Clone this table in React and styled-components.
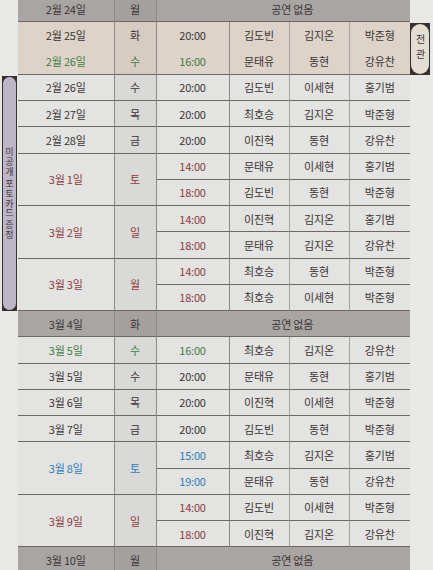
import React from "react";
import styled, { createGlobalStyle } from "styled-components";

const GlobalStyle = createGlobalStyle`
  html, body {
    margin: 0;
    padding: 0;
    background: #e8e8e7;
    overflow: hidden;
  }
  body {
    font-family: "Noto Sans CJK KR", "Noto Sans", sans-serif;
  }
`;

const tones = { plain: "#e3e3e2", tan: "#ddd3c8", off: "#a9a5a3" };
const dayTones = { plain: "#d9d9d8", tan: "#d6ccc1", off: "#a4a09e" };
const inks = { dark: "#3a3434", green: "#3f7b47", red: "#8c3b3d", blue: "#2c7cbf" };

const schedule = [
  { date: "2월 24일", day: "월", off: true },
  { date: "2월 25일", day: "화", tone: "tan", open: true, shows: [["20:00", "김도빈", "김지온", "박준형"]] },
  { date: "2월 26일", day: "수", tone: "tan", ink: "green", shows: [["16:00", "문태유", "동현", "강유찬"]] },
  { date: "2월 26일", day: "수", shows: [["20:00", "김도빈", "이세현", "홍기범"]] },
  { date: "2월 27일", day: "목", shows: [["20:00", "최호승", "김지온", "박준형"]] },
  { date: "2월 28일", day: "금", shows: [["20:00", "이진혁", "동현", "강유찬"]] },
  { date: "3월 1일", day: "토", ink: "red", shows: [["14:00", "문태유", "이세현", "홍기범"], ["18:00", "김도빈", "동현", "박준형"]] },
  { date: "3월 2일", day: "일", ink: "red", shows: [["14:00", "이진혁", "김지온", "홍기범"], ["18:00", "문태유", "김지온", "강유찬"]] },
  { date: "3월 3일", day: "월", ink: "red", shows: [["14:00", "최호승", "동현", "박준형"], ["18:00", "최호승", "이세현", "박준형"]] },
  { date: "3월 4일", day: "화", off: true },
  { date: "3월 5일", day: "수", ink: "green", shows: [["16:00", "최호승", "김지온", "강유찬"]] },
  { date: "3월 5일", day: "수", shows: [["20:00", "문태유", "동현", "홍기범"]] },
  { date: "3월 6일", day: "목", shows: [["20:00", "이진혁", "이세현", "박준형"]] },
  { date: "3월 7일", day: "금", shows: [["20:00", "김도빈", "동현", "박준형"]] },
  { date: "3월 8일", day: "토", ink: "blue", shows: [["15:00", "최호승", "김지온", "홍기범"], ["19:00", "문태유", "동현", "강유찬"]] },
  { date: "3월 9일", day: "일", ink: "red", shows: [["14:00", "김도빈", "이세현", "박준형"], ["18:00", "이진혁", "김지온", "강유찬"]] },
  { date: "3월 10일", day: "월", off: true },
];

const Sheet = styled.div`
  display: grid;
  grid-template-columns: 18px 96.5px 42px 73px 60px 60px 60.5px 23px;
  grid-auto-rows: 26.25px;
  margin-top: -4px;
  width: 433px;
  font-size: 11px;
  letter-spacing: -0.2px;
  color: #3a3434;
`;

const Cell = styled.div`
  grid-row: ${(p) => p.$row} / span ${(p) => p.$span || 1};
  display: flex;
  align-items: center;
  justify-content: center;
  box-sizing: border-box;
  background: ${(p) => tones[p.$tone || "plain"]};
  color: ${(p) => inks[p.$ink || "dark"]};
  border-bottom: ${(p) => (p.$open ? "none" : "1px solid #6f6767")};
  white-space: nowrap;
`;

const DateCell = styled(Cell)`
  grid-column: 2;
  border-right: 1px solid #8d8989;
`;

const DayCell = styled(Cell)`
  grid-column: 3;
  background: ${(p) => dayTones[p.$tone || "plain"]};
  border-right: 1px solid #8d8989;
`;

const TimeCell = styled(Cell)`
  grid-column: 4;
  border-right: 1px solid #8d8989;
`;

const NameCell = styled(Cell)`
  grid-column: ${(p) => p.$col};
  border-right: ${(p) => (p.$last ? "none" : "1px solid #a3a09f")};
`;

const OffCell = styled(Cell)`
  grid-column: 4 / span 4;
  padding-left: 18px;
`;

const BadgeFrame = styled.div`
  grid-column: ${(p) => p.$col};
  grid-row: ${(p) => p.$row} / span ${(p) => p.$span};
  justify-self: start;
  width: ${(p) => p.$width}px;
  margin-left: ${(p) => p.$inset}px;
  margin-top: 1px;
  box-sizing: border-box;
  padding: 1px;
  background: #372f30;
  display: flex;
`;

const Pill = styled.div`
  flex: 1;
  border-radius: ${(p) => p.$radius}px;
  background: ${(p) => p.$fill};
  display: flex;
  flex-direction: column;
  align-items: center;
  justify-content: center;
  gap: 2px;
`;

const VerticalText = styled.span`
  writing-mode: vertical-rl;
  text-orientation: upright;
  font-size: ${(p) => p.$size}px;
  line-height: 1;
  letter-spacing: ${(p) => p.$spacing}px;
  color: #3e3438;
  white-space: nowrap;
`;

export default function App() {
  const cells = [];
  let row = 1;

  schedule.forEach((entry, i) => {
    if (entry.off) {
      cells.push(
        <DateCell key={`d${i}`} $row={row} $tone="off">{entry.date}</DateCell>,
        <DayCell key={`w${i}`} $row={row} $tone="off">{entry.day}</DayCell>,
        <OffCell key={`o${i}`} $row={row} $tone="off">공연 없음</OffCell>
      );
      row += 1;
      return;
    }
    const span = entry.shows.length;
    const common = { $tone: entry.tone, $open: entry.open };
    cells.push(
      <DateCell key={`d${i}`} $row={row} $span={span} $ink={entry.ink} {...common}>{entry.date}</DateCell>,
      <DayCell key={`w${i}`} $row={row} $span={span} $ink={entry.ink} {...common}>{entry.day}</DayCell>
    );
    entry.shows.forEach(([time, ...names], j) => {
      cells.push(
        <TimeCell key={`t${i}-${j}`} $row={row + j} $ink={entry.ink} {...common}>{time}</TimeCell>
      );
      names.forEach((name, k) => {
        cells.push(
          <NameCell key={`n${i}-${j}-${k}`} $row={row + j} $col={5 + k} $last={k === 2} {...common}>
            {name}
          </NameCell>
        );
      });
    });
    row += span;
  });

  return (
    <>
      <GlobalStyle />
      <Sheet>
        {cells}
        <BadgeFrame $col={1} $row={4} $span={9} $width={15} $inset={2}>
          <Pill $radius={7} $fill="#bdb5c8">
            {["미공개", "포토카드", "증정"].map((word) => (
              <VerticalText key={word} $size={9} $spacing={0.8}>{word}</VerticalText>
            ))}
          </Pill>
        </BadgeFrame>
        <BadgeFrame $col={8} $row={2} $span={2} $width={20} $inset={0}>
          <Pill $radius={9} $fill="#e4ddd2">
            <VerticalText $size={10} $spacing={5}>전관</VerticalText>
          </Pill>
        </BadgeFrame>
      </Sheet>
    </>
  );
}
